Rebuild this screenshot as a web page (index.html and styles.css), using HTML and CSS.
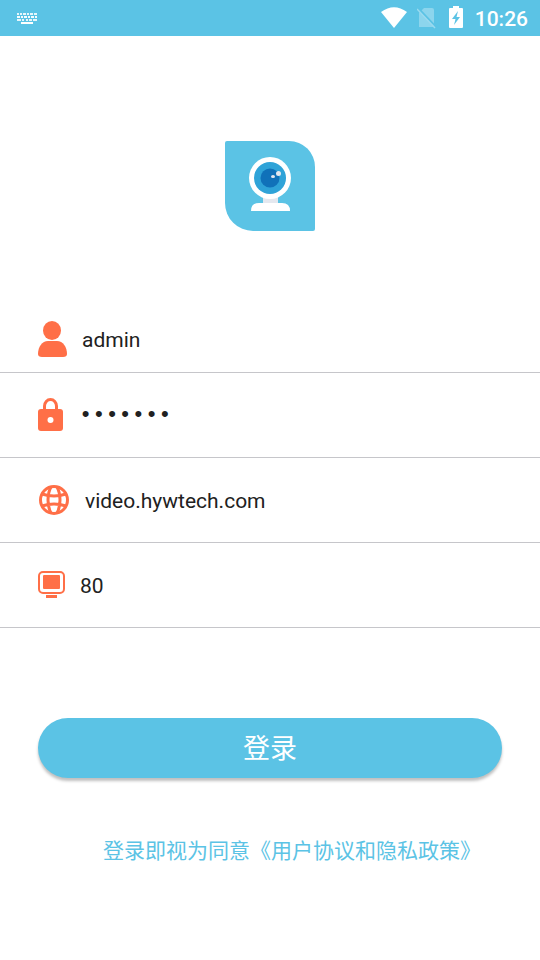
FILE: index.html
```html
<!DOCTYPE html>
<html lang="zh-CN">
<head>
<meta charset="utf-8">
<meta name="viewport" content="width=device-width, initial-scale=1">
<title>登录</title>
<link rel="stylesheet" href="styles.css">
</head>
<body>
<header class="status-bar">
  <svg class="status-keyboard" width="22" height="12" viewBox="0 0 22 12" aria-hidden="true">
    <g fill="none" stroke="#fff" stroke-width="2">
      <path d="M0 2h2M3 2h2M6 2h3M10 2h2M13 2h3M17 2h3" opacity=".85"/>
      <path d="M0 5h3M4 5h2M7 5h3M11 5h2M14 5h3M18 5h2" opacity=".95"/>
      <path d="M0 8h4M5 8h2M9 8h2M12 8h3M16 8h4" opacity=".85"/>
      <path d="M4 11h12"/>
    </g>
  </svg>
  <div class="status-icons">
    <svg width="28" height="24" viewBox="0 0 28 24" aria-hidden="true">
      <path fill="#fff" d="M0 6Q13-3.500 26 6L13 22Z"/>
    </svg>
    <svg width="20" height="24" viewBox="0 0 20 24" aria-hidden="true">
      <path fill="#fff" opacity=".3" d="M7 2h8q2 0 2 2v17H2V7z"/>
      <path d="M1 2l18 19" stroke="#5bc3e5" stroke-width="2"/>
      <path d="M0 3l18 19" stroke="#9bdaef" stroke-width="1.500"/>
    </svg>
    <svg width="14" height="24" viewBox="0 0 14 24" aria-hidden="true">
      <path fill="#fff" d="M4 0h6v2h3q1 0 1 1v18q0 1-1 1H1q-1 0-1-1V3q0-1 1-1h3z"/>
      <path fill="#5bc3e5" d="M9 5L3 13h3.500L5 19l6-8H7.500z"/>
    </svg>
    <time class="clock">10:26</time>
  </div>
</header>
<main class="login">
  <svg class="logo" width="90" height="90" viewBox="0 0 90 90" role="img" aria-label="摄像头">
    <path fill="#5bc3e5" d="M2 0H64A26 26 0 0 1 90 26V88Q90 90 88 90H28A28 28 0 0 1 0 62V2Q0 0 2 0Z"/>
    <path fill="#e4e8ef" d="M38 54h15v9H38z"/>
    <circle cx="45" cy="37" r="21" fill="#fff"/>
    <circle cx="45" cy="37" r="16" fill="#2fa3d8"/>
    <circle cx="45" cy="37" r="9.500" fill="#1071b9"/>
    <circle cx="53.500" cy="32.500" r="2.500" fill="#e4e8ef"/>
    <ellipse cx="48" cy="35.500" rx="2" ry="1.500" fill="#e4e8ef"/>
    <path fill="#fff" d="M26 70q0-8 8-8h23q8 0 8 8z"/>
  </svg>
  <form class="form">
    <div class="field field-first">
      <label for="user" aria-label="用户名">
        <svg width="29" height="36" viewBox="0 0 29 36" aria-hidden="true">
          <ellipse cx="14" cy="9.500" rx="9" ry="9.500" fill="#ff6f47"/>
          <path fill="#ff6f47" d="M10 20h9c6 0 10 6 10 13q0 3-4 3H4q-4 0-4-3c0-7 4-13 10-13z"/>
        </svg>
      </label>
      <input id="user" type="text" value="admin">
    </div>
    <div class="field">
      <label for="password" aria-label="密码">
        <svg width="26" height="34" viewBox="0 0 26 34" aria-hidden="true">
          <path d="M6.500 12V8a6 6.500 0 0 1 12 0v4" fill="none" stroke="#ff6f47" stroke-width="3"/>
          <rect y="11" width="25" height="22" rx="3" fill="#ff6f47"/>
          <circle cx="12.500" cy="22" r="3" fill="#fff"/>
        </svg>
      </label>
      <input id="password" class="password" type="password" value="1234567">
    </div>
    <div class="field">
      <label for="server" aria-label="服务器">
        <svg width="32" height="30" viewBox="0 0 32 30" aria-hidden="true">
          <g fill="none" stroke="#ff6f47" stroke-width="3">
            <circle cx="16" cy="15" r="13.500"/>
            <path d="M13 2C9 9 9 21 13 28M19 2c4 7 4 19 0 26M4 9q12 4 24 0M4 21q12-4 24 0"/>
          </g>
        </svg>
      </label>
      <input id="server" type="text" value="video.hywtech.com">
    </div>
    <div class="field">
      <label for="port" aria-label="端口">
        <svg width="27" height="28" viewBox="0 0 27 28" aria-hidden="true">
          <rect x="1" y="1" width="25" height="21" rx="4" fill="none" stroke="#ff6f47" stroke-width="2"/>
          <rect x="5" y="4" width="17" height="14" rx="1" fill="#ff6f47"/>
          <path fill="#ff6f47" d="M8 24h11v3H8z"/>
        </svg>
      </label>
      <input id="port" type="text" inputmode="numeric" value="80">
    </div>
    <button class="submit" type="submit">登录</button>
  </form>
  <a class="agreement" href="#agreement">登录即视为同意《用户协议和隐私政策》</a>
</main>
</body>
</html>
```
FILE: styles.css
```css
* {
  box-sizing: border-box;
}

body {
  margin: 0;
  background: #fff;
  color: #212121;
  font-family: Roboto, "Noto Sans CJK SC", sans-serif;
  font-size: 21px;
}

svg {
  display: block;
  flex: none;
}

.status-bar {
  display: flex;
  align-items: center;
  justify-content: space-between;
  height: 36px;
  padding: 0 12px 0 17px;
  background: #5bc3e5;
}

.status-icons {
  display: flex;
  align-items: center;
  gap: 12px;
}

.status-icons svg:first-child {
  margin-right: -4px;
}

.clock {
  padding-top: 2px;
  color: #fff;
  font-weight: 500;
  line-height: 34px;
}

.login {
  display: flex;
  flex-direction: column;
  padding-top: 105px;
}

.logo {
  align-self: center;
}

.form {
  display: flex;
  flex-direction: column;
  margin-top: 74px;
}

.field {
  display: flex;
  align-items: center;
  gap: 15px;
  height: 85px;
  padding: 0 38px;
  border-bottom: 1px solid #c6c6ca;
}

.field-first {
  height: 68px;
}

.field input {
  flex: 1;
  min-width: 0;
  padding: 2px 0 0;
  border: 0;
  outline: 0;
  background: transparent;
  color: inherit;
  font: inherit;
  line-height: 28px;
}

.field .password {
  font-family: "Liberation Mono", monospace;
  font-size: 22px;
}

.submit {
  height: 60px;
  margin: 90px 38px 0;
  padding: 0 0 4px;
  border: 0;
  border-radius: 30px;
  background: #5bc3e5;
  box-shadow: 0 3px 3px rgba(0, 0, 0, 0.25);
  color: #fff;
  font: inherit;
  font-size: 27px;
}

.agreement {
  align-self: flex-end;
  margin: 57px 59px 0 38px;
  color: #5bc3e5;
  line-height: 32px;
  text-decoration: none;
}
```
